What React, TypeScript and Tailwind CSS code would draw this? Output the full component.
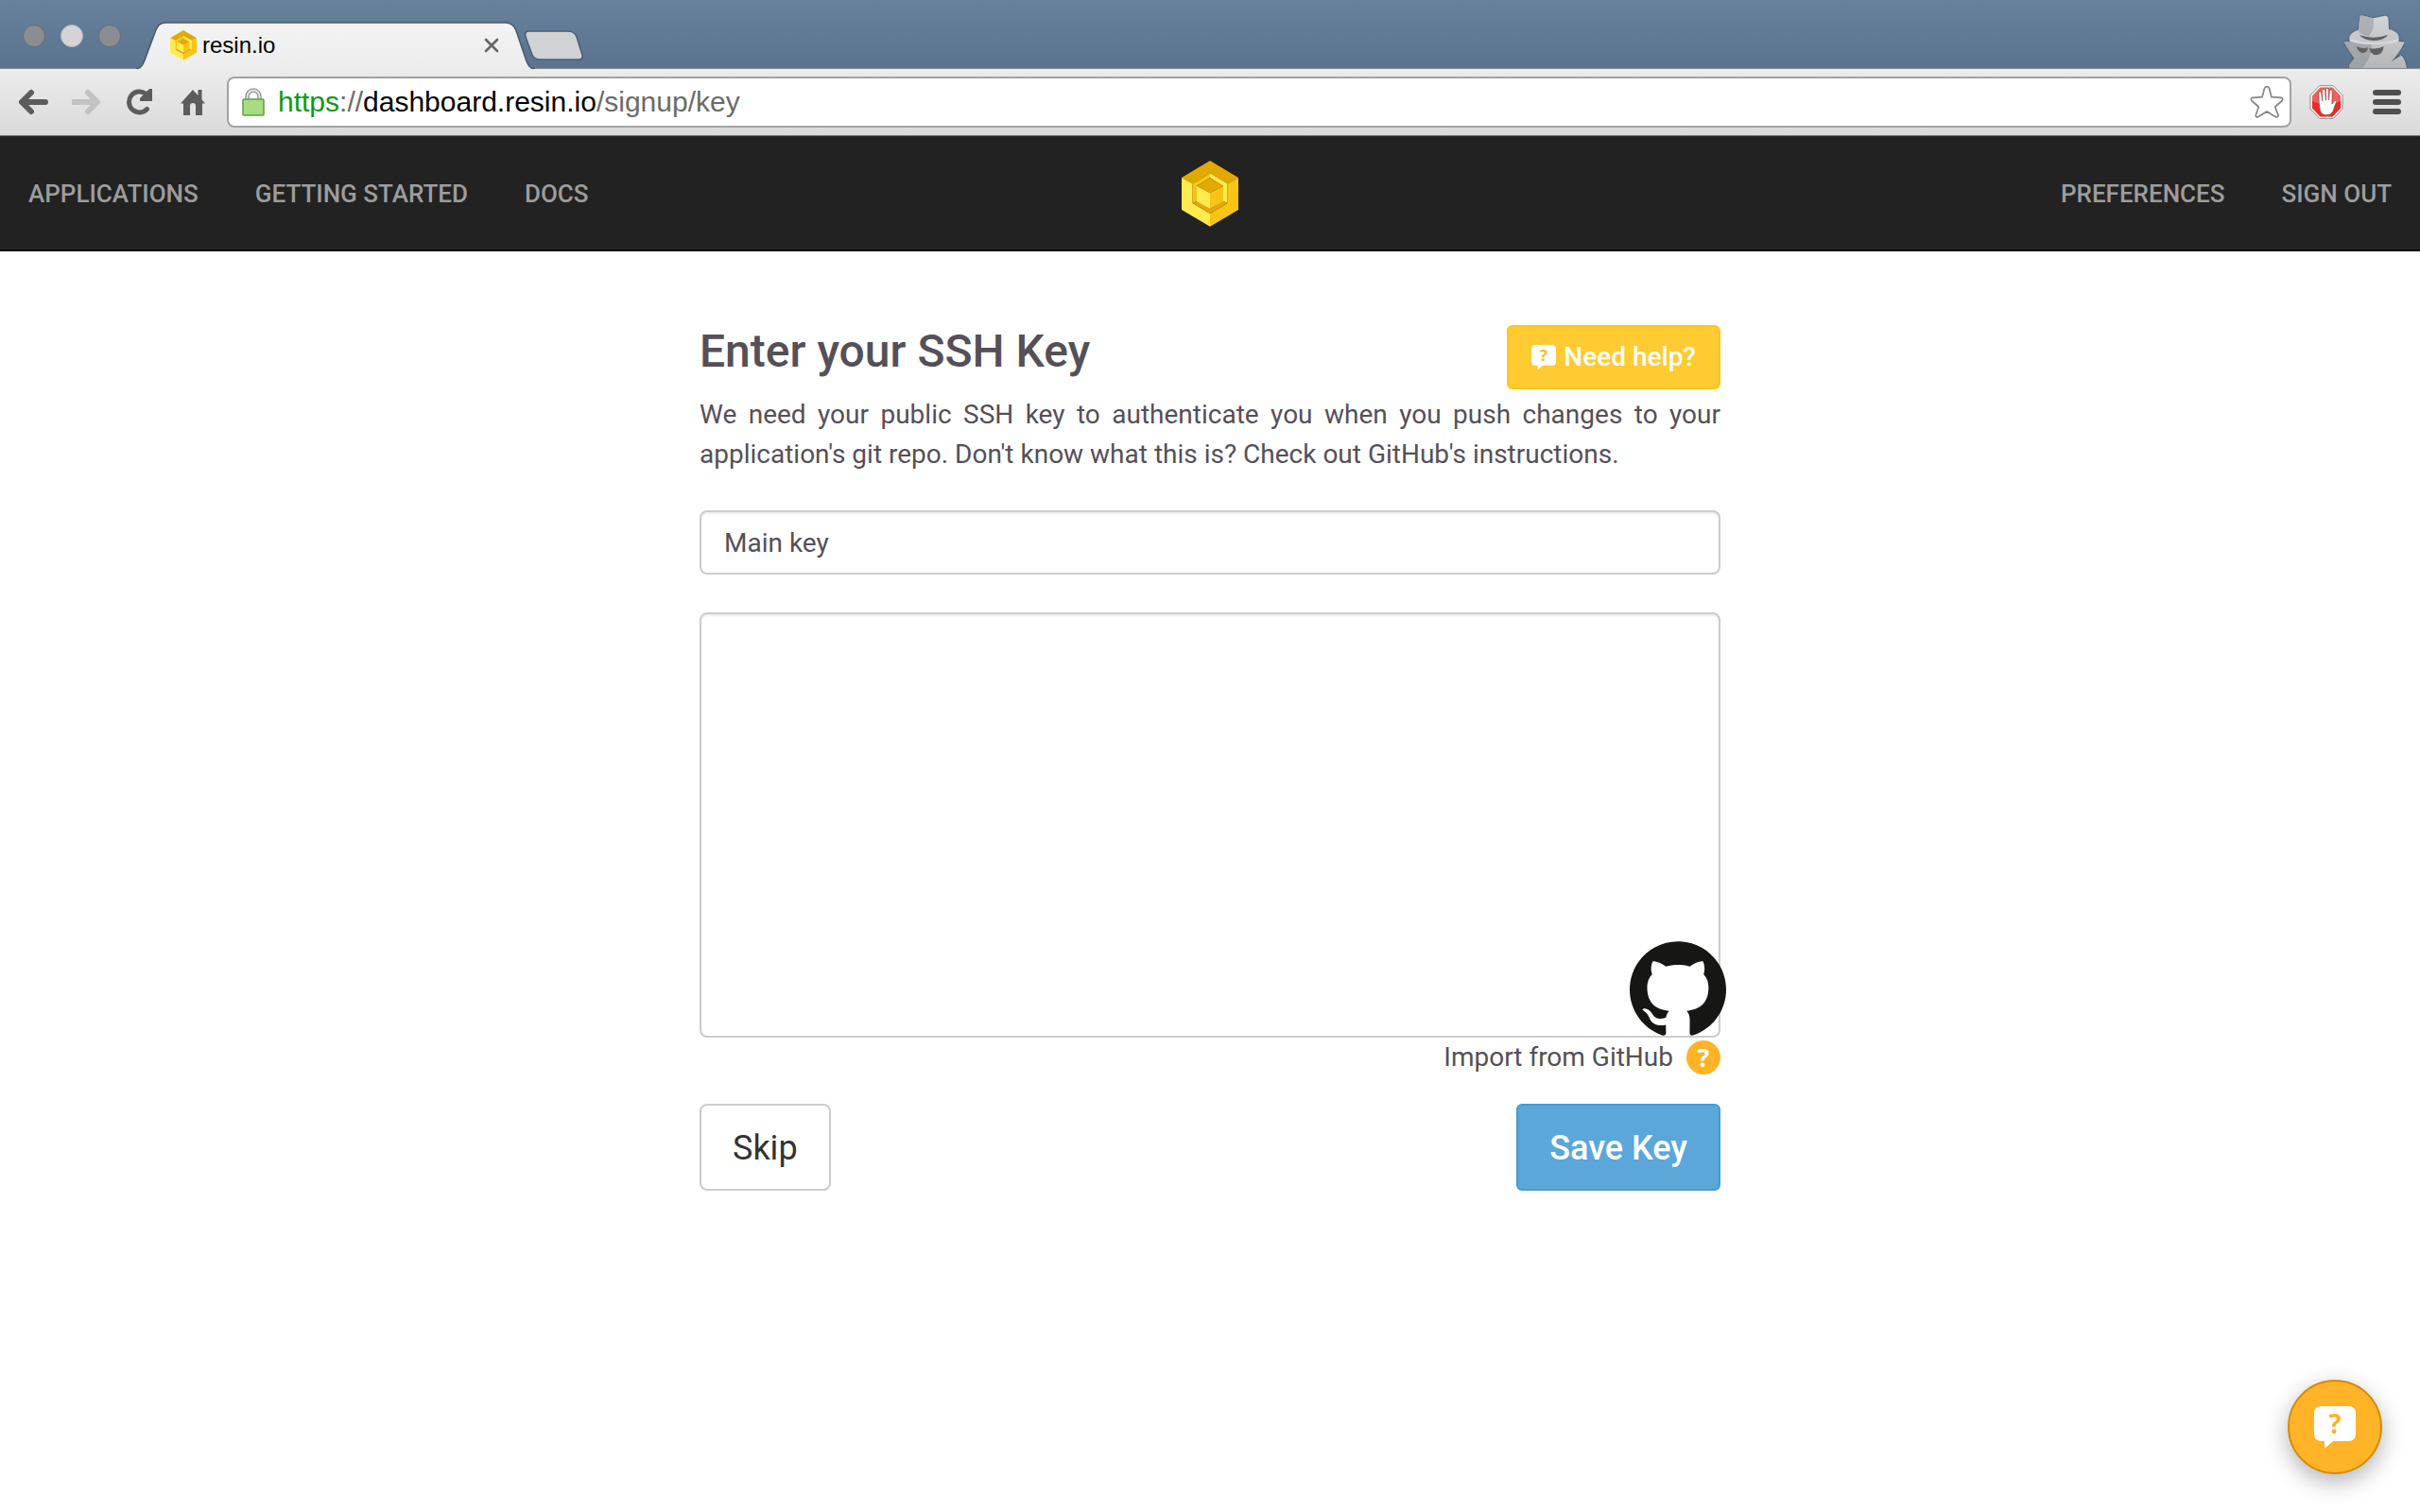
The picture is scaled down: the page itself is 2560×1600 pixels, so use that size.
import React, { useState } from 'react';

function CubeLogo({ className }: { className: string }) {
  return (
    <svg viewBox="90 60 180 210" className={className} aria-hidden="true" preserveAspectRatio="none">
      <path fill="#e2a900" d="M180 60 270 114 235 133 180 100 125 133 90 114Z" />
      <path fill="#ffea50" d="M90 114 125 133V195L180 228V269L90 216Z" />
      <path fill="#f9c413" d="M270 114 235 133V195L180 228V269L270 216Z" />
      <path fill="#f9c413" d="M180 100 125 133V195L138 188V140L180 115Z" />
      <path fill="#ffea50" d="M180 100 235 133V195L222 188V140L180 115Z" />
      <path fill="#e2a900" d="M125 195 138 188 180 213 222 188 235 195 180 228Z" />
      <path fill="#e2a900" d="M180 115 222 140 180 163 138 140Z" />
      <path fill="#ffea50" d="M138 140 180 163V213L138 190Z" />
      <path fill="#f9c413" d="M222 140 180 163V213L222 190Z" />
    </svg>
  );
}

function HelpBubble({ className, mark }: { className: string; mark: string }) {
  return (
    <svg viewBox="0 0 132 132" className={className} aria-hidden="true">
      <path
        fill="#fff"
        d="M24 0H108Q132 0 132 24V87Q132 111 108 111H61L37 131Q33 133 33 128V111H24Q0 111 0 87V24Q0 0 24 0Z"
      />
      <text x="66" y="87" textAnchor="middle" fontFamily="Open Sans, sans-serif" fontWeight="700" fontSize="84" fill={mark}>
        ?
      </text>
    </svg>
  );
}

function Incognito() {
  return (
    <svg viewBox="414 42 207 174" className="h-[58px] w-[69px]" aria-hidden="true">
      <defs>
        <linearGradient id="spy" x1="0" y1="0" x2="0" y2="1">
          <stop offset="0" stopColor="#d2d4d7" />
          <stop offset="1" stopColor="#b4b6b9" />
        </linearGradient>
        <filter id="spyShadow" x="-10%" y="-10%" width="120%" height="120%">
          <feDropShadow dx="0" dy="0" stdDeviation="3" floodColor="#2b3d50" floodOpacity="0.8" />
        </filter>
      </defs>
      <g filter="url(#spyShadow)">
        <path
          fill="url(#spy)"
          d="M436 218V205L452 185C440 168 428 150 419 134L438 131C432 118 438 103 465 95L469 52Q473 47 481 50L512 58L545 51Q556 49 559 57L561 93C587 99 598 113 591 131L611 134C600 156 586 176 571 195L598 175Q612 182 618 218Z"
        />
      </g>
      <path fill="#8d9095" fillOpacity="0.55" d="M436 218V205L452 185C440 168 428 150 419 134L438 131Q470 142 506 141Q510 178 476 218Z" />
      <path fill="#8d9095" fillOpacity="0.5" d="M469 52Q473 47 481 50L512 58Q517 92 497 116Q480 115 465 100Z" />
      <path fill="#dfe1e3" fillOpacity="0.7" d="M438 124Q510 146 592 124L591 132Q560 142 520 141Q470 141 439 131Z" />
      <path fill="#5e6063" d="M468 111Q512 127 558 111Q548 128 514 129Q480 128 468 111Z" />
      <path fill="#5e6063" d="M458 147Q478 156 495 151Q492 168 479 168Q464 167 458 147ZM499 153Q522 158 545 147Q542 174 521 175Q503 174 499 153Z" />
      <path fill="#606266" d="M568 196 590 175 598 177Z" />
    </svg>
  );
}

function BlockerSign() {
  return (
    <svg viewBox="309 266 108 110" className="h-9 w-9" aria-hidden="true">
      <path fill="#fff" stroke="#8a8a8a" strokeWidth="3" d="M341 268H385L415 299V343L385 374H341L311 343V299Z" />
      <path fill="#ea2b23" d="M343 274H383L409 301V341L383 368H343L317 341V301Z" />
      <path fill="#fff" fillOpacity="0.25" d="M343 274H383L409 301V318Q365 340 317 318V301Z" />
      <path
        fill="#fff"
        stroke="#8f3a36"
        strokeWidth="2"
        d="M338 292Q338 287 342 287Q346 287 347 292L350 317L349 284Q349 279 354 279Q358 279 359 284L361 315L361 281Q361 276 365 276Q370 276 370 281L371 315L373 286Q373 281 378 281Q382 281 382 286L381 327L389 317Q394 313 397 318Q390 332 385 349Q379 363 362 363Q346 362 342 347Q338 320 338 292Z"
      />
    </svg>
  );
}

const navLink = 'px-[30px] text-[26px] leading-[40px] font-medium text-[#9d9d9d]';
const toolButton = 'flex h-14 w-14 shrink-0 items-center justify-center';
const formButton = 'h-[92px] border-2 px-[33px] pt-[2px] text-[36px]';
const field =
  'block w-full rounded-lg border-2 border-[#cccccc] bg-white px-6 text-[28px] text-[#555058] shadow-[inset_0_2px_2px_rgba(0,0,0,0.075)] outline-none';

function BrowserChrome() {
  return (
    <div className="font-['Liberation_Sans',sans-serif]">
      <div className="flex h-[73px] items-end border-b border-[#85888b] bg-linear-to-b from-[#67819d] to-[#5a738f]">
        <div className="flex gap-4 self-start pt-[26px] pl-6">
          <button type="button" aria-label="Close window" className="h-6 w-6 rounded-full border border-[#6c6c75] bg-[#8c8c93]" />
          <button type="button" aria-label="Minimize window" className="h-6 w-6 rounded-full border border-[#b5b7ba] bg-[#d4d4d5]" />
          <button type="button" aria-label="Zoom window" className="h-6 w-6 rounded-full border border-[#6c6c75] bg-[#8c8c93]" />
        </div>
        <div className="relative -mb-px ml-4 flex h-[50px] w-[422px] items-center pr-[34px] pl-9">
          <svg viewBox="0 0 420 49" className="absolute inset-0 h-full w-full" preserveAspectRatio="none" aria-hidden="true">
            <defs>
              <linearGradient id="tab" x1="0" y1="0" x2="0" y2="1">
                <stop offset="0" stopColor="#f3f3f3" />
                <stop offset="1" stopColor="#ededed" />
              </linearGradient>
            </defs>
            <path
              fill="url(#tab)"
              stroke="#485a6d"
              strokeWidth="1.5"
              d="M0 48.500C5 48.500 7 45 9 40L21 8C23 3 26 1 31 1H389C395 1 398 4 400 9L411 41C413 46 415 48.500 420 48.500"
            />
            <path stroke="#ededed" strokeWidth="2" d="M5 48.500H415" />
          </svg>
          <CubeLogo className="relative h-8 w-7" />
          <span className="relative ml-[6px] text-[24px] leading-8 text-black">resin.io</span>
          <button type="button" aria-label="Close tab" className="relative ml-auto flex h-6 w-6 items-center justify-center">
            <svg viewBox="0 0 16 16" className="h-4 w-4" fill="none" stroke="#666" strokeWidth="2.600" strokeLinecap="round" aria-hidden="true">
              <path d="M2 2 14 14M14 2 2 14" />
            </svg>
          </button>
        </div>
        <button type="button" aria-label="New tab" className="mb-2 -ml-3">
          <svg viewBox="0 0 64 32" className="h-8 w-16" aria-hidden="true">
            <path
              fill="#d1d2d4"
              stroke="#4b5e73"
              strokeWidth="1.500"
              d="M5 1H46Q54 1 56 7L62 26Q63 31 58 31H18Q11 31 9 26L2 7Q1 1 5 1Z"
            />
          </svg>
        </button>
        <div className="ml-auto pr-[13px]">
          <Incognito />
        </div>
      </div>

      <div className="flex h-[71px] items-center border-b border-[#777] bg-linear-to-b from-[#ececec] to-[#dadada] pb-px pl-2">
        <button type="button" aria-label="Back" className={toolButton}>
          <svg viewBox="0 0 32 28" className="h-7 w-8" fill="none" stroke="#5c5c5c" strokeWidth="6" strokeLinecap="round" strokeLinejoin="round" aria-hidden="true">
            <path d="M13 4 3 14 13 24M4 14H28" />
          </svg>
        </button>
        <button type="button" aria-label="Forward" className={toolButton}>
          <svg viewBox="0 0 32 28" className="h-7 w-8" fill="none" stroke="#c2c2c2" strokeWidth="6" strokeLinecap="round" strokeLinejoin="round" aria-hidden="true">
            <path d="M17 4 27 14 17 24M26 14H2" />
          </svg>
        </button>
        <button type="button" aria-label="Reload" className={toolButton}>
          <svg viewBox="0 0 28 28" className="h-7 w-7" aria-hidden="true">
            <path fill="none" stroke="#5c5c5c" strokeWidth="5" strokeLinecap="round" d="M21.500 21.500A11 11 0 1 1 20 5" />
            <path fill="#5c5c5c" d="M27 0V13H14V10L24 0Z" />
          </svg>
        </button>
        <button type="button" aria-label="Home" className={toolButton}>
          <svg viewBox="0 0 26 28" className="h-7 w-[26px]" aria-hidden="true">
            <path fill="#5c5c5c" d="M13 1 18.500 7V1H22.500V11.500L26 15.500H23V28H16V18Q16 15 13 15Q10 15 10 18V28H3V15.500H0Z" />
          </svg>
        </button>
        <div className="ml-2 flex h-[54px] flex-1 items-center rounded-lg border-2 border-[#a3a3a3] bg-white pr-1 pl-[14px]">
          <svg viewBox="0 0 24 30" className="h-[30px] w-6" aria-hidden="true">
            <path fill="none" stroke="#8d8d8d" strokeWidth="4.500" d="M5.500 14V9.500A6.500 7 0 0 1 18.500 9.500V14" />
            <path fill="none" stroke="#e4e4e4" strokeWidth="2" d="M5.500 14V9.500A6.500 7 0 0 1 18.500 9.500V14" />
            <rect x="1" y="12" width="22" height="17" rx="1" fill="#a6dd82" stroke="#5f9f45" strokeWidth="1.500" />
          </svg>
          <div
            role="textbox"
            tabIndex={0}
            aria-label="Address"
            className="ml-[14px] flex-1 text-[30px] leading-[44px] whitespace-nowrap text-[#6b6b6b]"
          >
            <span className="text-[#0b9a17]">https</span>://<span className="text-black">dashboard.resin.io</span>/signup/key
          </div>
          <button type="button" aria-label="Bookmark this page" className="flex h-10 w-10 items-center justify-center">
            <svg viewBox="119 266 108 106" className="h-9 w-9" fill="#fff" stroke="#848484" strokeWidth="5" strokeLinejoin="round" aria-hidden="true">
              <path d="M166 274Q173 266 180 274L188 303L219 305Q227 309 220 316L199 334L209 360Q209 369 201 366L173 349L145 366Q137 369 138 360L147 334L126 316Q119 308 128 305L158 303Z" />
            </svg>
          </button>
        </div>
        <button type="button" aria-label="Ad blocker" className="ml-2 flex h-14 w-[58px] items-center justify-center">
          <BlockerSign />
        </button>
        <button type="button" aria-label="Menu" className="flex h-14 w-[70px] flex-col items-center justify-center gap-1">
          <span className="h-[6px] w-[30px] rounded-full bg-[#4f4f4f]" />
          <span className="h-[6px] w-[30px] rounded-full bg-[#4f4f4f]" />
          <span className="h-[6px] w-[30px] rounded-full bg-[#4f4f4f]" />
        </button>
      </div>
    </div>
  );
}

export default function App() {
  const [name, setName] = useState('Main key');
  const [key, setKey] = useState('');

  return (
    <div className="min-h-screen bg-white font-['Roboto',sans-serif] text-[#555058]">
      <BrowserChrome />

      <nav className="grid grid-cols-[1fr_auto_1fr] items-center border-b-2 border-[#080808] bg-[#222222] pt-[26px] pb-6">
        <div className="flex">
          <a href="#applications" className={navLink}>APPLICATIONS</a>
          <a href="#getting-started" className={navLink}>GETTING STARTED</a>
          <a href="#docs" className={navLink}>DOCS</a>
        </div>
        <a href="#home" aria-label="resin.io home">
          <CubeLogo className="h-[70px] w-[60px]" />
        </a>
        <div className="flex justify-end">
          <a href="#preferences" className={navLink}>PREFERENCES</a>
          <a href="#sign-out" className={navLink}>SIGN OUT</a>
        </div>
      </nav>

      <main className="mx-auto max-w-[1080px] pt-[78px]">
        <div className="flex items-start justify-between">
          <h1 className="text-[48px] leading-[56px] font-medium">Enter your SSH Key</h1>
          <button
            type="button"
            className="flex h-[68px] items-center gap-2 rounded-md border-2 border-[#ffc61a] bg-[#ffcb33] px-6 text-[28px] font-medium text-white"
          >
            <HelpBubble className="h-[26px] w-[26px]" mark="#ffb326" />
            Need help?
          </button>
        </div>
        <p className="mt-[6px] text-justify text-[28px] leading-[42px]">
          We need your public SSH key to authenticate you when you push changes to your application's git repo. Don't know
          what this is? Check out GitHub's instructions.
        </p>

        <form onSubmit={(e) => e.preventDefault()}>
          <input
            aria-label="Key name"
            className={`${field} mt-[38px] h-[68px]`}
            value={name}
            onChange={(e) => setName(e.target.value)}
          />
          <div className="relative mt-10">
            <textarea
              aria-label="Public SSH key"
              className={`${field} h-[450px] resize-none py-3`}
              value={key}
              onChange={(e) => setKey(e.target.value)}
            />
            <button type="button" aria-label="Import key from GitHub" className="absolute -right-[6px] bottom-px">
              <svg viewBox="0 0 24 24" className="h-[102px] w-[102px]" fill="#161614" aria-hidden="true">
                <path d="M12 .297c-6.630 0-12 5.373-12 12 0 5.303 3.438 9.800 8.205 11.385.6.113.82-.258.82-.577 0-.285-.01-1.040-.015-2.040-3.338.724-4.042-1.610-4.042-1.610C4.422 18.070 3.633 17.700 3.633 17.700c-1.087-.744.084-.729.084-.729 1.205.084 1.838 1.236 1.838 1.236 1.070 1.835 2.809 1.305 3.495.998.108-.776.417-1.305.76-1.605-2.665-.3-5.466-1.332-5.466-5.930 0-1.310.465-2.380 1.235-3.220-.135-.303-.54-1.523.105-3.176 0 0 1.005-.322 3.300 1.230.96-.267 1.980-.399 3-.405 1.020.006 2.040.138 3 .405 2.280-1.552 3.285-1.230 3.285-1.230.645 1.653.24 2.873.12 3.176.765.84 1.230 1.910 1.230 3.220 0 4.610-2.805 5.625-5.475 5.920.42.36.81 1.096.81 2.220 0 1.606-.015 2.896-.015 3.286 0 .315.21.69.825.57C20.565 22.092 24 17.592 24 12.297c0-6.627-5.373-12-12-12" />
              </svg>
            </button>
          </div>
          <div className="flex h-[42px] items-center justify-end gap-[14px]">
            <a href="#import" className="text-[28px] leading-[42px]">Import from GitHub</a>
            <button
              type="button"
              aria-label="About importing keys"
              className="h-9 w-9 rounded-full bg-[#ffb326] text-center font-['Open_Sans',sans-serif] text-[26px] leading-9 font-bold text-white"
            >
              ?
            </button>
          </div>
          <div className="mt-7 flex justify-between">
            <button type="button" className={`${formButton} rounded-lg border-[#cccccc] bg-white text-[#333333]`}>
              Skip
            </button>
            <button type="submit" className={`${formButton} rounded-md border-[#469ad4] bg-[#5ba7da] font-medium text-white`}>
              Save Key
            </button>
          </div>
        </form>
      </main>

      <button
        type="button"
        aria-label="Get help"
        className="fixed right-10 bottom-10 flex h-[100px] w-[100px] items-center justify-center rounded-full border-2 border-[#d38b0c] bg-[#ffb326] shadow-[0_8px_24px_rgba(0,0,0,0.3)]"
      >
        <HelpBubble className="h-11 w-11" mark="#ffb326" />
      </button>
    </div>
  );
}
